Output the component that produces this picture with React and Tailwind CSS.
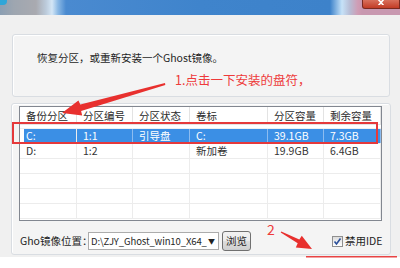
import React from "react";

const cols = [57, 56, 57, 78, 56, 57];
const headers = ["备份分区", "分区编号", "分区状态", "卷标", "分区容量", "剩余容量"];
const rows = [
  ["C:", "1:1", "引导盘", "C:", "39.1GB", "7.3GB"],
  ["D:", "1:2", "", "新加卷", "19.9GB", "6.4GB"],
  ["", "", "", "", "", ""],
  ["", "", "", "", "", ""],
  ["", "", "", "", "", ""],
  ["", "", "", "", "", ""],
];

export default function App() {
  return (
    <div className="relative w-[400px] h-[268px] overflow-hidden bg-white font-['Noto_Sans_CJK_SC',sans-serif] text-[10.5px] leading-[16px] text-[#1e1e1e]">
      {/* title bar */}
      <div className="flex h-[15px] justify-between bg-[linear-gradient(to_right,#8b9fb3_0px,#9ea6b0_14px,#a9aab0_36px,#bccbdb_46px,#d3e6f6_52px,#8ab8e4_58px,#4a8ad0_66px,#3f84cc_200px,#3d82ca_330px,#c6e2f8_342px,#b8bcd4_350px,#d09cb4_358px,#c898b0_362px)]">
        <div className="w-[7px] h-[5px] rounded-br-[4px] bg-[#2fa6d8]" />
        <div className="w-[38px] h-[9px] rounded-bl-[3px] border border-t-0 border-[#7a2a20] bg-[linear-gradient(to_bottom,#d8705c,#c23c26)] flex justify-center items-start">
          <svg width="8" height="5" viewBox="0 0 8 5" className="mt-[0px]">
            <path d="M1 -1 L4 2.5 L7 -1 M1 6 L4 2.5 L7 6" stroke="#ffffff" strokeWidth="1.6" fill="none" />
          </svg>
        </div>
      </div>

      {/* body */}
      <div className="h-[242px] bg-[#f0f0f0] pt-[19px] pl-[12px]">
        {/* panel 1 */}
        <div className="w-[378px] h-[63px] rounded-[3px] border border-[#d9dde2] bg-[#f4f4f4] shadow-[inset_1px_1px_0_#ffffff] pl-[24px] pt-[15px]">
          <span>恢复分区，或重新安装一个Ghost镜像。</span>
        </div>

        {/* panel 2 */}
        <div className="mt-[6px] -ml-[1px] w-[380px] h-[152px] rounded-[3px] border border-[#d9dde2] bg-[#f4f4f4] shadow-[inset_1px_1px_0_#ffffff] pl-[7px] pt-[2px]">
          {/* list view */}
          <div className="w-[363px] h-[115px] border border-[#828790] bg-white overflow-hidden text-[#333]">
            <div className="flex h-[18px] border-b border-[#e5e5e5]">
              {headers.map((h, i) => (
                <div
                  key={i}
                  style={{ width: cols[i] }}
                  className="shrink-0 border-r border-[#e3e3e3] pl-[6px] pt-[1px] text-[#2a2a2a] whitespace-nowrap overflow-hidden"
                >
                  {h}
                </div>
              ))}
            </div>
            <div className="mt-[3px] border-t border-[#f0f0f0]">
              {rows.map((r, ri) => (
                <div key={ri} className="flex h-[15px] border-b border-[#ececec]">
                  {r.map((c, ci) => {
                    const sel = ri === 0;
                    if (ci === 0) {
                      return (
                        <div key={ci} style={{ width: cols[0] }} className="shrink-0 flex border-r border-[#ececec]">
                          <div className="w-[4px]" />
                          <div className={`flex-1 pl-[2px] leading-[14px] ${sel ? "bg-[#3b8fe5] text-white" : ""}`}>{c}</div>
                        </div>
                      );
                    }
                    return (
                      <div
                        key={ci}
                        style={{ width: cols[ci] }}
                        className={`shrink-0 pl-[6px] leading-[14px] border-r ${sel ? "bg-[#3b8fe5] text-white border-[#8cbcf0]" : "border-[#ececec]"}`}
                      >
                        {c}
                      </div>
                    );
                  })}
                </div>
              ))}
            </div>
          </div>

          {/* bottom row */}
          <div className="flex items-center mt-[10px] h-[20px] pl-[1px]">
            <span className="w-[68px] shrink-0 whitespace-nowrap">Gho镜像位置：</span>
            <div className="w-[131px] h-[18px] border border-[#acacac] bg-white flex items-center pl-[2px] pr-[3px]">
              <span className="flex-1 min-w-0 whitespace-nowrap overflow-hidden text-[9.5px] tracking-[-0.1px]">D:\ZJY_Ghost_win10_X64_</span>
              <span className="shrink-0 text-[7px] leading-[8px] text-[#222] ml-[1px]">▼</span>
            </div>
            <div className="ml-[3px] w-[29px] h-[20px] rounded-[3px] border border-[#707070] bg-[linear-gradient(to_bottom,#f2f2f2,#ebebeb_50%,#dcdcdc_51%,#cfcfcf)] flex items-center justify-center">
              浏览
            </div>
            <div className="ml-[81px] w-[11px] h-[11px] border border-[#8f8f8f] bg-[linear-gradient(to_bottom,#dcdcdc,#ffffff)] flex items-center justify-center">
              <svg width="9" height="9" viewBox="0 0 9 9">
                <path d="M1.5 4.5 L3.5 7 L7.5 1.5" stroke="#2a4f9a" strokeWidth="1.6" fill="none" />
              </svg>
            </div>
            <span className="ml-[2px]">禁用IDE</span>
          </div>
        </div>
      </div>

      {/* annotations */}
      <div className="absolute left-[12px] top-[122px] w-[366px] h-[22px] border-2 border-[#e5393b]" />
      <div className="absolute left-[175px] top-[71px] text-[12.5px] leading-[18px] text-[#ee3a3a] whitespace-nowrap">
        1.点击一下安装的盘符，
      </div>
      <div className="absolute left-[267px] top-[221px] text-[14px] leading-[16px] text-[#ee3a3a]">2</div>
      <svg className="absolute left-0 top-0" width="400" height="268" viewBox="0 0 400 268">
        <polygon
          points="165,83 80.3,104.6 78.4,100.6 62,113 82.2,115.5 81.1,110.9 165.3,85"
          fill="#e8302e"
        />
        <polygon
          points="281.3,231.4 299.3,239.6 301.8,235.8 312,249 295.8,247.6 297.7,243.3 280.7,232.6"
          fill="#e8302e"
        />
        <rect x="306" y="256" width="91" height="1.5" fill="#e84444" />
      </svg>
    </div>
  );
}
